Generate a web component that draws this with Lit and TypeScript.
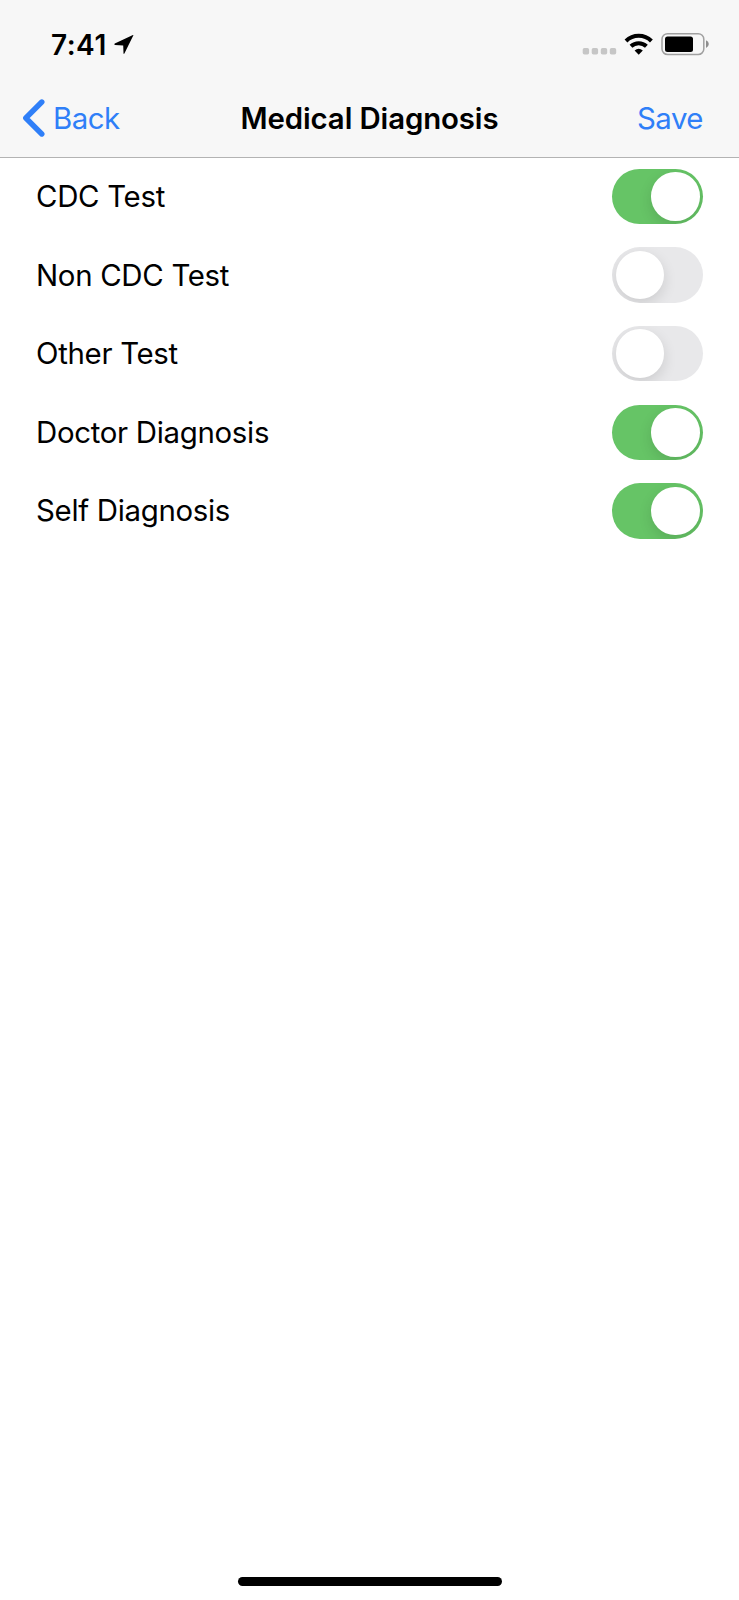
import { LitElement, css, html, svg } from 'lit';
import { customElement, property, state } from 'lit/decorators.js';
import { classMap } from 'lit/directives/class-map.js';

type Diagnosis = { id: string; label: string; on: boolean };

const locationIcon = svg`<path d="M19.4 0.3 L10.4 18.6 Q9.6 19.4 9.5 18 L9.2 10.4 L1 9.9 Q-0.4 9.6 0.8 8.4 L18.4 0.2 Q19.6 -0.3 19.4 0.3 Z" />`;

@customElement('ios-switch')
export class IosSwitch extends LitElement {
  @property({ type: Boolean }) on = false;

  static override styles = css`
    :host {
      display: block;
    }

    button {
      display: flex;
      align-items: center;
      box-sizing: border-box;
      width: 91px;
      height: 55.5px;
      padding: 3.5px;
      border: none;
      border-radius: 28px;
      background: #e8e8ea;
      overflow: hidden;
    }

    button.on {
      justify-content: flex-end;
      background: #66c466;
    }

    span {
      width: 48.5px;
      height: 48.5px;
      border-radius: 50%;
      background: #fff;
      box-shadow: 0 5px 14px rgba(0, 0, 0, 0.12);
    }
  `;

  protected override render() {
    return html`
      <button type="button" role="switch" aria-checked=${this.on} class=${classMap({ on: this.on })}>
        <span></span>
      </button>
    `;
  }
}

@customElement('app-root')
export class AppRoot extends LitElement {
  @state() private items: Diagnosis[] = [
    { id: 'cdc', label: 'CDC Test', on: true },
    { id: 'non-cdc', label: 'Non CDC Test', on: false },
    { id: 'other', label: 'Other Test', on: false },
    { id: 'doctor', label: 'Doctor Diagnosis', on: true },
    { id: 'self', label: 'Self Diagnosis', on: true }
  ];

  static override styles = css`
    :host {
      display: flex;
      flex-direction: column;
      box-sizing: border-box;
      height: 1600px;
      background: #fff;
      color: #000;
      font-family: Inter, 'Liberation Sans', sans-serif;
      font-size: 29.4px;
      line-height: 36px;
    }

    svg {
      display: block;
    }

    header {
      box-sizing: border-box;
      height: 158px;
      background: #f7f7f7;
      border-bottom: 1px solid #b3b3b3;
    }

    .status {
      display: flex;
      justify-content: space-between;
      height: 79px;
      padding: 0 30px 0 51px;
    }

    .clock,
    .indicators {
      display: flex;
      align-items: center;
      height: 88px;
    }

    .time {
      padding-top: 1px;
      font-size: 28px;
      font-weight: 600;
      letter-spacing: 0.5px;
    }

    .clock svg {
      margin-left: 7.5px;
      margin-top: 1px;
    }

    nav {
      display: grid;
      grid-template-columns: 1fr auto 1fr;
      align-items: center;
      height: 78px;
      padding: 0 22px;
    }

    nav span,
    h1 {
      padding-top: 1px;
    }

    .back {
      display: flex;
      align-items: center;
      gap: 7px;
    }

    .back,
    .save {
      color: #2f7ff8;
      letter-spacing: -0.5px;
    }

    .save {
      padding-top: 1px;
      padding-right: 14px;
      text-align: right;
    }

    h1 {
      margin: 0;
      font-size: inherit;
      font-weight: 600;
      letter-spacing: -0.12px;
    }

    ul {
      flex: 1;
      margin: 0;
      padding: 0 36px;
      list-style: none;
      letter-spacing: -0.3px;
    }

    li {
      display: flex;
      align-items: center;
      justify-content: space-between;
      height: 77px;
      padding-bottom: 1.6px;
    }

    li span {
      padding-top: 1px;
    }

    .home {
      align-self: center;
      width: 264px;
      height: 9px;
      margin-bottom: 14.5px;
      border-radius: 5px;
      background: #000;
    }
  `;

  protected override render() {
    return html`
      <header>
        <div class="status">
          <div class="clock">
            <span class="time">7:41</span>
            <svg width="20" height="20" viewBox="0 0 20 20">${locationIcon}</svg>
          </div>
          <div class="indicators">${this.renderIndicators()}</div>
        </div>
        <nav>
          <div class="back">
            <svg width="24" height="38" viewBox="0 0 24 38" fill="none" stroke="currentColor" stroke-width="5.4" stroke-linecap="round" stroke-linejoin="round">
              <path d="M19.8 3 L3.8 19 L19.8 35" />
            </svg>
            <span>Back</span>
          </div>
          <h1>Medical Diagnosis</h1>
          <div class="save">Save</div>
        </nav>
      </header>
      <ul>
        ${this.items.map((item) => html`
          <li>
            <span>${item.label}</span>
            <ios-switch ?on=${item.on} @click=${() => this.toggle(item.id)}></ios-switch>
          </li>
        `)}
      </ul>
      <div class="home"></div>
    `;
  }

  // signal dots, wifi and battery
  private renderIndicators() {
    return html`
      <svg width="127" height="24" viewBox="582 32 127 24">
        <g fill="#c6c6c6">
          ${[582.7, 591.7, 600.8, 609.8].map((x) => svg`<rect x=${x} y="48" width="6.4" height="6.5" rx="1.7" />`)}
        </g>
        <g fill="none" stroke="#000" stroke-width="4">
          <path d="M626 41 A18 18 0 0 1 651.4 41" />
          <path d="M631 46.3 A11 11 0 0 1 646.4 46.3" />
        </g>
        <path d="M634.6 50.5 Q638.7 47.2 642.8 50.5 L638.7 54.7 Z" />
        <rect x="662" y="33.7" width="41.8" height="20.8" rx="5.6" fill="none" stroke="#a0a0a0" stroke-width="1.5" />
        <rect x="665" y="36.5" width="28" height="15.5" rx="2.5" />
        <path d="M706 40.3 Q708.8 41.3 708.8 44.1 Q708.8 46.9 706 47.9 Z" fill="#8e8e8e" />
      </svg>
    `;
  }

  private toggle(id: string) {
    this.items = this.items.map((item) => (item.id === id ? { ...item, on: !item.on } : item));
  }
}
